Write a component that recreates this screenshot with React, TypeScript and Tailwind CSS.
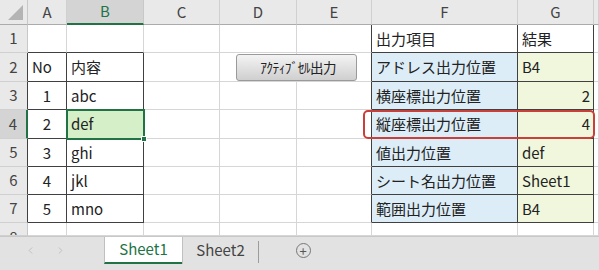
import { ChevronLeft, ChevronRight } from "lucide-react";

const COLS = ["", "A", "B", "C", "D", "E", "F", "G", ""];
const ROWS = [1, 2, 3, 4, 5, 6, 7, 8];

type Cell = { text: string; align?: "left" | "right" | "center"; fill?: string };

const data: Record<string, Cell> = {
  "1,2": { text: "No" },
  "2,2": { text: "内容" },
  "1,3": { text: "1", align: "center" },
  "2,3": { text: "abc" },
  "1,4": { text: "2", align: "center" },
  "2,4": { text: "def" },
  "1,5": { text: "3", align: "center" },
  "2,5": { text: "ghi" },
  "1,6": { text: "4", align: "center" },
  "2,6": { text: "jkl" },
  "1,7": { text: "5", align: "center" },
  "2,7": { text: "mno" },
  "6,1": { text: "出力項目" },
  "7,1": { text: "結果" },
  "6,2": { text: "アドレス出力位置" },
  "7,2": { text: "B4" },
  "6,3": { text: "横座標出力位置" },
  "7,3": { text: "2", align: "right" },
  "6,4": { text: "縦座標出力位置" },
  "7,4": { text: "4", align: "right" },
  "6,5": { text: "値出力位置" },
  "7,5": { text: "def" },
  "6,6": { text: "シート名出力位置" },
  "7,6": { text: "Sheet1" },
  "6,7": { text: "範囲出力位置" },
  "7,7": { text: "B4" },
};

const inTable = (c: number, r: number) =>
  ((c === 1 || c === 2) && r >= 2 && r <= 7) || ((c === 6 || c === 7) && r >= 1 && r <= 7);

const fillFor = (c: number, r: number) => {
  if (c === 2 && r === 4) return "bg-[#d5efc8]";
  if (c === 6 && r >= 2 && r <= 7) return "bg-[#dcedf8]";
  if (c === 7 && r >= 2 && r <= 7) return "bg-[#f1f7dc]";
  return "bg-white";
};

const HeaderRow = () => (
  <>
    {COLS.map((col, c) => {
      if (c === 0)
        return (
          <div key={c} className="relative border-r border-b border-r-[#c8c8c8] border-b-[#ababab] bg-[#e9e9e9]">
            <svg className="absolute right-[4px] bottom-[4px]" width="15" height="15" viewBox="0 0 15 15">
              <polygon points="15,0 15,15 0,15" fill="#b4b4b4" />
            </svg>
          </div>
        );
      const selected = col === "B";
      return (
        <div
          key={c}
          className={
            selected
              ? "flex items-center justify-center border-r border-b-2 border-r-[#c8c8c8] border-b-[#217346] bg-[#d4d4d4] text-[15px] text-[#217346]"
              : "flex items-center justify-center border-r border-b border-r-[#d0d0d0] border-b-[#ababab] bg-[#e9e9e9] text-[15px] text-[#444]"
          }
        >
          {col}
        </div>
      );
    })}
  </>
);

const SheetRow = ({ r }: { r: number }) => (
  <>
    {COLS.map((_, c) => {
      if (c === 0) {
        const sel = r === 4;
        return (
          <div
            key={c}
            className={
              (sel ? "bg-[#d4d4d4] border-r-2 border-r-[#217346] " : "bg-[#e9e9e9] border-r ") +
              (!sel && inTable(1, r) ? "border-r-[#404040] " : !sel ? "border-r-[#c8c8c8] " : "") +
              "flex items-center justify-center overflow-hidden border-b border-b-[#d0d0d0] text-[15px] text-[#444]"
            }
          >
            <span className={r === 8 ? "translate-y-[8px]" : ""}>{r}</span>
          </div>
        );
      }
      const cell = data[`${c},${r}`];
      const darkR = inTable(c, r) || inTable(c + 1, r);
      const darkB = inTable(c, r) || inTable(c, r + 1);
      const align =
        cell?.align === "center" ? "justify-center" : cell?.align === "right" ? "justify-end pr-[3px]" : "justify-start pl-[4px]";
      return (
        <div
          key={c}
          className={
            "flex items-center overflow-visible whitespace-nowrap border-r border-b pt-[1px] text-[15px] text-[#222] " +
            (darkR ? "border-r-[#404040] " : "border-r-[#d6d6d6] ") +
            (darkB ? "border-b-[#404040] " : "border-b-[#d6d6d6] ") +
            fillFor(c, r) +
            " " +
            align
          }
        >
          {cell?.text}
        </div>
      );
    })}
  </>
);

export default function App() {
  return (
    <div
      className="relative h-[270px] w-[599px] overflow-hidden bg-white"
      style={{ fontFamily: '"Noto Sans CJK JP", "Noto Sans", sans-serif' }}
    >
      <div className="grid grid-cols-[28px_39px_77px_76px_77px_75px_146px_76px_5px] grid-rows-[25px_28px_29px_28px_29px_28px_28px_28px_13px]">
        <HeaderRow />
        {ROWS.map((r) => (
          <SheetRow key={r} r={r} />
        ))}
      </div>

      {/* active cell B4 */}
      <div className="absolute top-[109px] left-[66px] h-[31px] w-[79px] border-2 border-[#217346]">
        <div className="absolute -right-[4px] -bottom-[4px] h-[6px] w-[6px] border border-white bg-[#217346]" />
      </div>

      {/* macro button */}
      <div className="absolute top-[54px] left-[236px] flex h-[27px] w-[121px] items-center justify-center rounded-[3px] border border-[#9a9a9a] bg-gradient-to-b from-[#f4f4f4] to-[#cfcfcf] pl-[3px] text-[13.5px] tracking-[-0.6px] text-[#222]">
        ｱｸﾃｨﾌﾞｾﾙ出力
      </div>

      {/* red highlight */}
      <div className="absolute top-[110px] left-[363px] h-[29px] w-[232px] rounded-[5px] border-2 border-[#c9403a]" />

      {/* sheet tabs */}
      <div className="flex h-[34px] items-start border-t border-[#c8c8c8] bg-[#e2e2e2]">
        <div className="flex h-[27px] w-[104px] items-center gap-[19px] pl-[25px] text-[#bdbdbd]">
          <ChevronLeft size={11} strokeWidth={2} />
          <ChevronRight size={11} strokeWidth={2} />
        </div>
        <div className="flex h-[27px] w-[78px] items-center justify-center border-b-2 border-l border-b-[#217346] border-l-[#c0c0c0] bg-white pb-[1px] text-[15px] text-[#217346]">
          Sheet1
        </div>
        <div className="flex h-[27px] w-[76px] items-center justify-center border-l border-[#c0c0c0] text-[15px] text-[#444]">
          Sheet2
        </div>
        <div className="mt-[4px] h-[22px] w-px bg-[#9c9c9c]" />
        <div className="flex h-[27px] w-[88px] items-center justify-center">
          <div className="flex h-[15px] w-[15px] items-center justify-center rounded-full border border-[#777] text-[13px] leading-none text-[#555]">
            +
          </div>
        </div>
      </div>
    </div>
  );
}
